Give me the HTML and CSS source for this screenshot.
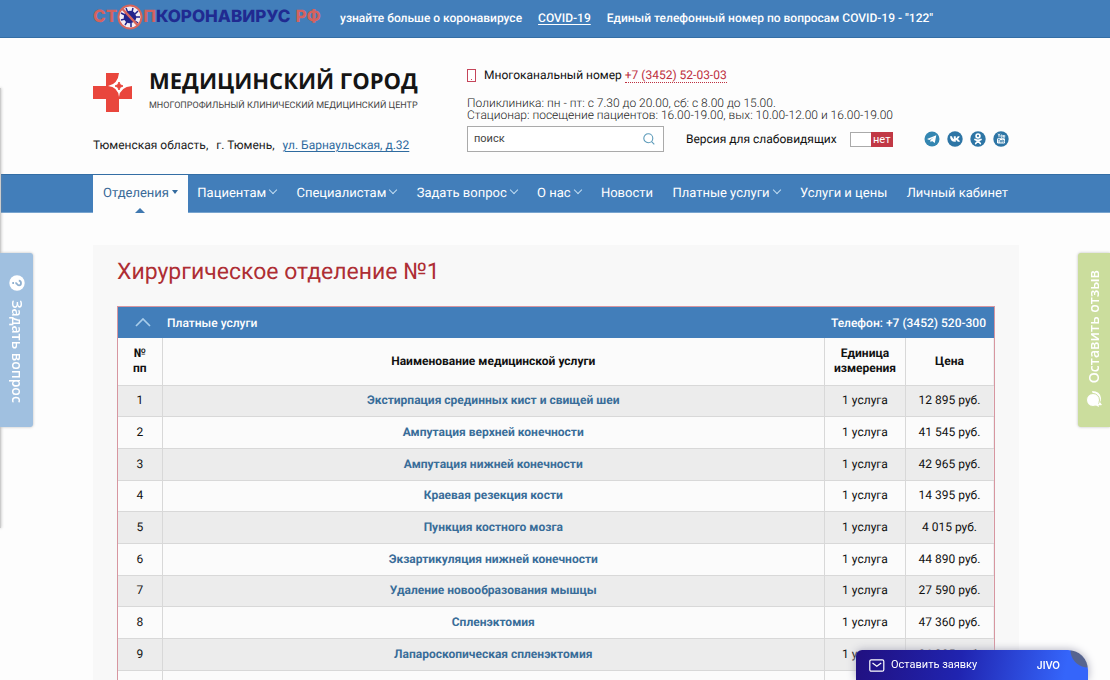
FILE: index.html
```
<!DOCTYPE html>
<html lang="ru">
<head>
<meta charset="utf-8">
<title>Хирургическое отделение №1</title>
<link rel="stylesheet" href="styles.css">
</head>
<body>
<div class="topbar">
  <div class="wrap topbar-in">
    <div class="stop">
      <span class="stop-red">СТ</span>
      <svg class="virus" width="26" height="28" viewBox="0 0 26 28"><circle cx="13" cy="14" r="11.5" fill="#f3eef4" stroke="#d8655c" stroke-width="2"/><path d="M8 10Q12 6 17 9Q21 14 18 18Q13 22 9 19Q5 15 8 10" fill="#22258c"/><path d="M11 10L9 5M15 9L16 5M18 11L21 8M19 14h4M18 18l3 2M14 20v4M10 19l-2 3M8 16l-4 1M8 12l-4-2" stroke="#22258c" stroke-width="1.500"/><path d="M5 5.500l16 17" stroke="#d8655c" stroke-width="2.500"/></svg>
      <span class="stop-red">П</span><span class="stop-blue">КОРОНАВИРУС</span><span class="stop-red stop-rf">РФ</span>
    </div>
    <span class="top-more">узнайте больше о коронавирусе</span>
    <a class="top-link" href="#">COVID-19</a>
    <span class="top-phone">Единый телефонный номер по вопросам COVID-19 - "122"</span>
  </div>
</div>
<header class="wrap header">
  <div class="brand">
    <a class="logo" href="#">
      <svg width="39" height="39" viewBox="0 0 39 39"><path d="M13 0h13v13h13v13H26v13H13V26H0V13h13z" fill="#e9463d"/><path d="M26 0Q25 11 15 13Q25 14 26 24Q27 14 39 13Q27 11 26 0" fill="#fff"/><path d="M26 9Q26.500 12.500 30 13Q26.500 13.500 26 17Q25.500 13.500 22 13Q25.500 12.500 26 9" fill="#e9463d" stroke="#e9463d"/></svg>
      <span class="logo-text"><span class="logo-name">МЕДИЦИНСКИЙ ГОРОД</span><span class="logo-sub">МНОГОПРОФИЛЬНЫЙ КЛИНИЧЕСКИЙ МЕДИЦИНСКИЙ ЦЕНТР</span></span>
    </a>
    <div class="address"><span>Тюменская область,</span><span>г. Тюмень,</span><a href="#">ул. Барнаульская, д.32</a></div>
  </div>
  <div class="contacts">
    <div class="phone"><svg width="9" height="13" viewBox="0 0 9 13"><rect x=".5" y=".5" width="8" height="12" fill="#fff" stroke="#c5455a"/><path d="M4 10h1v1H4z" fill="#c5455a"/></svg><span>Многоканальный номер <a href="#">+7 (3452) 52-03-03</a></span></div>
    <div class="hours">Поликлиника: пн - пт: с 7.30 до 20.00, сб: с 8.00 до 15.00.<br>Стационар: посещение пациентов: 16.00-19.00, вых: 10.00-12.00 и 16.00-19.00</div>
    <div class="tools">
      <form class="search"><input type="text" placeholder="поиск" aria-label="поиск"><button type="button" aria-label="Найти"><svg width="12" height="12" viewBox="0 0 12 12" fill="none" stroke="#5b9ab9" stroke-width="1.100"><circle cx="5.300" cy="5.300" r="4.500"/><path d="M8.600 8.600L11.300 11.300"/></svg></button></form>
      <span class="vision" id="vision">Версия для слабовидящих</span>
      <button class="switch" type="button" role="switch" aria-checked="false" aria-labelledby="vision"><span>нет</span></button>
      <div class="social">
        <a class="tg" href="#" aria-label="Telegram"><svg width="16" height="16" viewBox="0 0 16 16"><circle cx="8" cy="8" r="7.500" fill="#3486b1"/><path d="M3 8.100L12.300 4.300L10.800 12L8 9.900L6.600 11.200L6.300 9.100L10 6.200L5.300 8.900z" fill="#fff"/></svg></a>
        <a href="#" aria-label="ВКонтакте"><svg width="16" height="16" viewBox="0 0 16 16"><circle cx="8" cy="8" r="7.700" fill="#2d75a5"/><path d="M3 5.300h2C5.500 7 6.200 8 6.800 8.200V5.300h2v2C9.600 7 10.200 6.200 10.700 5.300h2C12.200 6.700 11.600 7.400 10.700 8C11.700 8.600 12.500 9.400 13 10.800h-2.200C10.400 9.900 9.700 9.200 8.800 9v1.800h-1C5 10.800 3.300 9 3 5.300z" fill="#fff"/></svg></a>
        <a href="#" aria-label="Одноклассники"><svg width="16" height="16" viewBox="0 0 16 16"><circle cx="8" cy="8" r="7.700" fill="#2d75a5"/><g fill="none" stroke="#fff" stroke-width="1.700" stroke-linecap="round"><circle cx="8" cy="4.900" r="1.900"/><path d="M5 8.500Q8 10.300 11 8.500M8 9.800L5.700 12.500M8 9.800L10.300 12.500"/></g></svg></a>
        <a href="#" aria-label="YouTube"><svg width="16" height="16" viewBox="0 0 16 16"><circle cx="8" cy="8" r="7.700" fill="#2d75a5"/><rect x="4" y="7.200" width="8" height="5.300" rx="1.200" fill="#fff"/><path d="M5 2.700l1 2v1.700M7 2.700l-1 2M8 4v2.300h1.200V4zM10.500 4v2.300h1.200V4" fill="none" stroke="#fff" stroke-width=".8"/><path d="M5 8.500h1.800M5.900 8.500v3M7.500 9v2.200h1V9M9.700 8.500v2.700h1.200V9.500H9.700" fill="none" stroke="#2d75a5" stroke-width=".7"/></svg></a>
      </div>
    </div>
  </div>
</header>
<nav class="nav">
  <ul class="wrap menu">
    <li class="active"><a href="#">Отделения</a></li>
    <li class="drop"><a href="#">Пациентам</a></li>
    <li class="drop"><a href="#">Специалистам</a></li>
    <li class="drop"><a href="#">Задать вопрос</a></li>
    <li class="drop"><a href="#">О нас</a></li>
    <li><a href="#">Новости</a></li>
    <li class="drop"><a href="#">Платные услуги</a></li>
    <li><a href="#">Услуги и цены</a></li>
    <li><a href="#">Личный кабинет</a></li>
  </ul>
</nav>
<main class="wrap content">
  <h1>Хирургическое отделение №1</h1>
  <section class="prices">
    <div class="prices-head">
      <svg width="16" height="9" viewBox="0 0 16 9" fill="none" stroke="#a9cdea" stroke-width="1.700"><path d="M1 8L8 1L15 8"/></svg>
      <span>Платные услуги</span><span class="tel">Телефон: +7 (3452) 520-300</span>
    </div>
    <table>
      <colgroup><col class="c-num"><col><col class="c-unit"><col class="c-price"></colgroup>
      <thead><tr><th>№<br>пп</th><th>Наименование медицинской услуги</th><th>Единица<br>измерения</th><th>Цена</th></tr></thead>
      <tbody>
        <tr><td>1</td><td><a href="#">Экстирпация срединных кист и свищей шеи</a></td><td>1 услуга</td><td>12 895 руб.</td></tr>
        <tr><td>2</td><td><a href="#">Ампутация верхней конечности</a></td><td>1 услуга</td><td>41 545 руб.</td></tr>
        <tr><td>3</td><td><a href="#">Ампутация нижней конечности</a></td><td>1 услуга</td><td>42 965 руб.</td></tr>
        <tr><td>4</td><td><a href="#">Краевая резекция кости</a></td><td>1 услуга</td><td>14 395 руб.</td></tr>
        <tr><td>5</td><td><a href="#">Пункция костного мозга</a></td><td>1 услуга</td><td>4 015 руб.</td></tr>
        <tr><td>6</td><td><a href="#">Экзартикуляция нижней конечности</a></td><td>1 услуга</td><td>44 890 руб.</td></tr>
        <tr><td>7</td><td><a href="#">Удаление новообразования мышцы</a></td><td>1 услуга</td><td>27 590 руб.</td></tr>
        <tr><td>8</td><td><a href="#">Спленэктомия</a></td><td>1 услуга</td><td>47 360 руб.</td></tr>
        <tr><td>9</td><td><a href="#">Лапароскопическая спленэктомия</a></td><td>1 услуга</td><td>86 985 руб.</td></tr>
        <tr><td></td><td></td><td></td><td></td></tr>
      </tbody>
    </table>
  </section>
</main>
<div class="edge"></div>
<button class="side ask" type="button"><svg width="16" height="16" viewBox="0 0 16 16"><circle cx="8" cy="8" r="7.700" fill="#fff"/><path d="M5.600 6.200Q5.700 4 8 4Q10.400 4 10.400 6Q10.400 7.200 9.100 7.900Q8 8.500 8 9.600M8 11v1.700" transform="rotate(90 8 8)" fill="none" stroke="#8fb0d0" stroke-width="1.800"/></svg><span>Задать вопрос</span></button>
<button class="side review" type="button"><svg width="17" height="16" viewBox="0 0 17 16"><path d="M6 0Q14 0 15 7Q15 10 14 11L16 14Q12 15 10 13Z" fill="#fff"/><ellipse cx="7" cy="9" rx="6.500" ry="6.500" fill="#fff" stroke="#cbdd9d"/><path d="M9 14l4 2l-1-5z" fill="#fff"/></svg><span>Оставить отзыв</span></button>
<button class="jivo" type="button"><svg width="16" height="13" viewBox="0 0 16 13" fill="none" stroke="#fff" stroke-width="1.200"><rect x=".8" y=".8" width="14" height="11.400" rx="1.500"/><path d="M3.500 4L7.800 7.300L12.200 4"/></svg><span>Оставить заявку</span><b>JIVO</b></button>
</body>
</html>
```

FILE: styles.css
```
* { box-sizing: border-box; }
html { height: 100%; }
body { margin: 0; height: 100%; overflow: hidden; background: #fdfdfd; color: #222; font: 12px/16px Roboto, "Liberation Sans", sans-serif; text-rendering: geometricPrecision; }
button { border: 0; padding: 0; font: inherit; cursor: pointer; }
svg { display: block; flex: none; }
.wrap { margin: 0 91px 0 93px; }
.topbar { height: 38px; background: #427eba; border-bottom: 1px solid #346ea5; color: #fff; font-weight: 500; }
.topbar-in { display: flex; align-items: center; height: 36px; white-space: nowrap; }
.stop { display: flex; align-items: center; width: 247px; font: 800 17px/20px Inter, sans-serif; padding-bottom: 2px; }
.stop-red { color: #d4625f; }
.stop-blue { color: #202a91; }
.stop-rf { margin-left: 5px; }
.top-link { color: #fff; margin: 0 16px; text-underline-offset: 2px; }

.header { display: flex; height: 136px; white-space: nowrap; }
.brand { width: 374px; padding-top: 28px; }
.logo { display: flex; align-items: center; gap: 17px; color: #151515; text-decoration: none; }
.logo-text { display: flex; flex-direction: column; gap: 5px; }
.logo svg { margin-top: 7px; }
.logo-name { font: 700 22px/30px "Open Sans", sans-serif; }
.logo-sub { font: 9px/11px Roboto, sans-serif; color: #444; }
.address { display: flex; gap: 8px; margin-top: 25px; }
.address a { color: #2f6b9f; text-underline-offset: 2px; }
.contacts { flex: 1; padding-top: 28px; }
.phone { display: flex; align-items: center; gap: 8px; line-height: 18px; color: #111; }
.phone a { color: #bd2f40; text-decoration: none; border-bottom: 1px dotted #bd2f40; }
.hours { margin-top: 13px; line-height: 12px; font-weight: 300; }
.tools { display: flex; align-items: center; margin-top: 5px; }
.search { display: flex; align-items: center; width: 197px; height: 26px; padding: 0 8px 0 6px; border: 1px solid #aaa; background: #fff; }
.search input { flex: 1; min-width: 0; padding: 0; border: 0; outline: 0; background: none; font: 11px/16px Roboto, sans-serif; }
.search input::placeholder { color: #444; }
.search button { background: none; }
.vision { margin-left: 22px; color: #111; }
.switch { display: flex; justify-content: flex-end; width: 43px; height: 15px; margin-left: 13px; border: 1px solid #aaa; background: #fff; }
.switch span { width: 22px; height: 15px; margin: -1px; background: #c13845; color: #fff; font-size: 11px; line-height: 15px; }
.social { display: flex; gap: 7px; margin-left: auto; margin-right: 10px; }

.nav { height: 39px; background: #427eba; border-top: 1px solid #346ea5; border-bottom: 1px solid #78a4cf; }
.menu { display: flex; justify-content: space-between; padding: 0 11px 0 0; list-style: none; white-space: nowrap; font-size: 13px; line-height: 37px; }
.menu a { color: #fff; text-decoration: none; }
.menu .active { position: relative; width: 95px; height: 38px; margin-right: -10px; background: #fdfdfd; text-align: center; }
.menu .active a { color: #3a6a98; }
.active a::after { content: ""; display: inline-block; margin: 0 0 3px 3px; border: 3px solid transparent; border-top: 4px solid #346b9f; border-bottom: 0; }
.active::after { content: ""; position: absolute; left: 42px; bottom: 0; border: 5px solid transparent; border-bottom-color: #3f78b0; border-top: 0; }
.drop a::after { content: ""; display: inline-block; width: 5px; height: 5px; margin: 0 1px 4px 4px; border: solid #c0dcf2; border-width: 0 1px 1px 0; transform: rotate(45deg); }

.content { margin-top: 32px; padding: 11px 24px 0; background: #f8f8f8; }
h1 { margin: 0; color: #ae2e34; font-size: 23px; line-height: 32px; font-weight: 400; }
.prices { margin-top: 18px; border: 1px solid #d796a0; border-bottom: 0; }
.prices-head { display: flex; align-items: center; height: 31px; padding: 0 8px 0 17px; gap: 16px; background: #427eba; color: #fff; font-weight: 500; }
.tel { margin-left: auto; }
table { width: 100%; border-collapse: collapse; table-layout: fixed; background: #fbfbfb; text-align: center; font-size: 12px; line-height: 15px; color: #111; }
.c-num { width: 44px; }
.c-unit { width: 81px; }
.c-price { width: 88px; }
th, td { padding: 0; border: 1px solid #d8d8d8; border-width: 0 1px 1px 0; }
th:last-child, td:last-child { border-right-color: #eee; }
th { height: 47px; }
td { height: 32px; }
tbody tr:nth-child(3n+1) td { height: 31px; }
tbody tr:nth-child(odd) { background: #ececec; }
td a { color: #396d99; font-weight: 700; text-decoration: none; }

.edge { position: fixed; left: 0; top: 88px; width: 1px; height: 440px; background: #ccc; box-shadow: 0 0 3px #888; }
.side { position: fixed; top: 253px; height: 174px; display: flex; align-items: center; justify-content: flex-start; color: #fff; font: 600 14px/20px "Open Sans", sans-serif; writing-mode: vertical-rl; box-shadow: 0 0 3px #bbb; }
.ask { left: 0; width: 33px; background: #a0c0e0; border-radius: 0 3px 3px 0; padding-top: 22px; gap: 9px; }
.review { right: 0; width: 32px; background: #cbdd9d; border-radius: 3px 0 0 3px; flex-direction: row-reverse; padding-bottom: 20px; gap: 8px; }
.review span { transform: rotate(180deg); }
.jivo { position: fixed; right: 22px; bottom: 0; width: 232px; height: 30px; display: flex; align-items: center; padding: 0 28px 0 13px; gap: 6px; border-radius: 6px 20px 0 0; color: #fff; font-size: 11px; background: radial-gradient(circle at 100% 0, #56648f 0 17px, transparent 18px), linear-gradient(100deg, #211080 0, #2024b0 45%, #3565fa 90%); box-shadow: 0 0 8px #aab; }
.jivo b { margin-left: auto; font: 600 10px/16px Inter, sans-serif; }
```
